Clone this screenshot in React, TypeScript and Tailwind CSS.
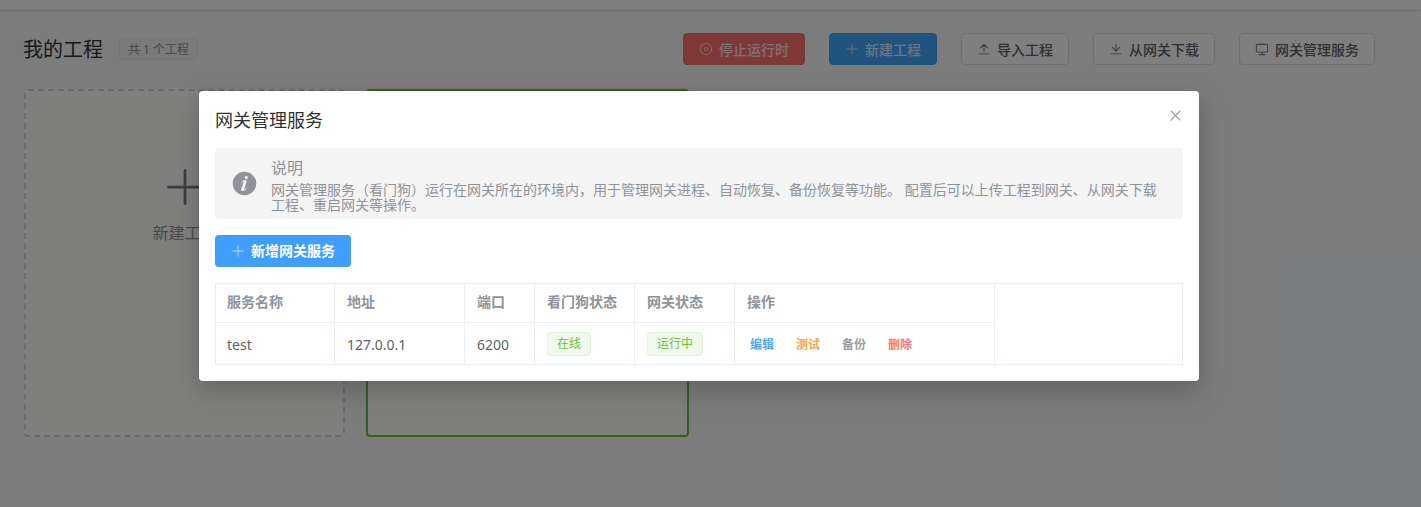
import type { ReactNode } from 'react';

const ICONS: Record<string, string> = {
  plus: 'M480 480V128a32 32 0 0 1 64 0v352h352a32 32 0 1 1 0 64H544v352a32 32 0 1 1-64 0V544H128a32 32 0 0 1 0-64h352z',
  upload: 'M160 832h704a32 32 0 1 1 0 64H160a32 32 0 1 1 0-64zm384-578.304V704h-64V247.296L237.248 490.048 192 444.8 508.8 128l316.8 316.8-45.312 45.248L544 253.696z',
  download: 'M160 832h704a32 32 0 1 1 0 64H160a32 32 0 1 1 0-64zm384-253.696 236.288-236.352 45.248 45.248L508.8 704 192 387.2l45.248-45.248L480 584.704V128h64v450.304z',
  monitor: 'M544 768v128h192a32 32 0 1 1 0 64H288a32 32 0 1 1 0-64h192V768H192A128 128 0 0 1 64 640V256a128 128 0 0 1 128-128h640a128 128 0 0 1 128 128v384a128 128 0 0 1-128 128H544zM192 192a64 64 0 0 0-64 64v384a64 64 0 0 0 64 64h640a64 64 0 0 0 64-64V256a64 64 0 0 0-64-64H192z',
  pause: 'M512 64a448 448 0 1 1 0 896 448 448 0 0 1 0-896zm0 832a384 384 0 0 0 0-768 384 384 0 0 0 0 768zm-96-544q32 0 32 32v256q0 32-32 32t-32-32V384q0-32 32-32zm192 0q32 0 32 32v256q0 32-32 32t-32-32V384q0-32 32-32z',
  close: 'M764.288 214.592 512 466.88 259.712 214.592a31.936 31.936 0 0 0-45.12 45.12L466.752 512 214.528 764.224a31.936 31.936 0 1 0 45.12 45.184L512 557.184l252.288 252.288a31.936 31.936 0 0 0 45.12-45.12L557.12 512.064l252.288-252.352a31.936 31.936 0 1 0-45.12-45.184z',
  info: 'M512 64a448 448 0 1 1 0 896.064A448 448 0 0 1 512 64zm67.2 275.072c33.28 0 60.288-23.104 60.288-57.344s-27.072-57.344-60.288-57.344c-33.28 0-60.16 23.104-60.16 57.344s26.88 57.344 60.16 57.344zM590.912 699.2c0-6.848 2.368-24.64 1.024-34.752l-52.608 60.544c-10.88 11.456-24.512 19.392-30.912 17.28a12.992 12.992 0 0 1-8.256-14.72l87.68-276.992c7.168-35.136-12.544-67.2-54.336-71.296-44.096 0-108.992 44.736-148.48 101.504 0 6.784-1.28 23.68.064 33.792l52.544-60.608c10.88-11.328 23.552-19.328 29.952-17.152a12.8 12.8 0 0 1 7.808 16.128L388.48 728.576c-10.048 30.72 8.96 60.8 55.104 68.032 67.904 0 108-43.68 147.584-97.408z',
};

function Icon({ name, className }: { name: string; className: string }) {
  return (
    <svg viewBox="0 0 1024 1024" fill="currentColor" className={className}>
      <path d={ICONS[name]} />
    </svg>
  );
}

function PageButton({ icon, className, children }: { icon: string; className: string; children: ReactNode }) {
  return (
    <button className={`flex h-8 items-center gap-1.5 rounded border px-[15px] text-sm font-medium ${className}`}>
      <Icon name={icon} className="h-[14px] w-[14px]" />
      <span className="pt-[2px]">{children}</span>
    </button>
  );
}

function Tag({ children }: { children: ReactNode }) {
  return (
    <span className="flex h-6 items-center rounded border border-[#e1f3d8] bg-[#f0f9eb] px-[9px] text-xs text-[#67c23a]">
      {children}
    </span>
  );
}

const thClass = 'border-r border-b border-[#ebeef5] pb-[2px] pl-3 text-left text-sm font-bold text-[#909399]';
const tdClass = 'border-r border-[#ebeef5] pt-[2px] pl-3 text-sm text-[#606266]';
const tagCellClass = 'border-r border-[#ebeef5] pl-3 text-sm text-[#606266]';

export default function App() {
  return (
    <div className="relative h-[507px] w-[1421px] overflow-hidden bg-[#f8f9fb] font-['Noto_Sans','Noto_Sans_CJK_SC',sans-serif]">
      <div className="h-[10px] border-b border-[#f0f0f0] bg-white shadow-sm" />

      <div className="flex h-[79px] items-start pt-[23px] pr-[46px] pl-[23px]">
        <h1 className="flex h-8 items-center pt-[2px] text-xl text-[#303133]">我的工程</h1>
        <span className="mt-[5px] ml-4 flex h-[22px] items-center rounded border border-[#e9e9eb] bg-[#f4f4f5] px-2 pt-[2px] text-xs text-[#909399]">
          共 1 个工程
        </span>
        <div className="ml-auto flex gap-6">
          <PageButton icon="pause" className="border-[#f56c6c] bg-[#ff6f6f] text-[#fde2e2]">停止运行时</PageButton>
          <PageButton icon="plus" className="border-[#409eff] bg-[#43a6ff] text-[#d9ecff]">新建工程</PageButton>
          <PageButton icon="upload" className="border-[#dcdfe6] bg-white text-[#606266]">导入工程</PageButton>
          <PageButton icon="download" className="border-[#dcdfe6] bg-white text-[#606266]">从网关下载</PageButton>
          <PageButton icon="monitor" className="border-[#dcdfe6] bg-white text-[#606266]">网关管理服务</PageButton>
        </div>
      </div>

      <div className="flex gap-[21px] pl-6">
        <div className="flex h-[348px] w-[321px] flex-col items-center rounded border-2 border-dashed border-[#d4d7de] bg-[#fefefa] pt-[74px] text-[#909399]">
          <Icon name="plus" className="h-11 w-11 text-[#7a7d83]" />
          <span className="mt-[12px] text-base">新建工程</span>
        </div>
        <div className="h-[348px] w-[323px] rounded border-2 border-[#67c23a] bg-[#fefefa]" />
      </div>

      <div className="absolute inset-0 bg-black/50" />

      <div className="absolute top-[91px] left-[199px] h-[290px] w-[1000px] rounded bg-white px-4 shadow-[0_12px_32px_4px_rgba(0,0,0,0.08),0_8px_20px_rgba(0,0,0,0.12)]">
        <h2 className="flex h-[57px] items-center pt-[1px] text-lg text-[#303133]">网关管理服务</h2>
        <Icon name="close" className="absolute top-[16px] right-[15px] h-[17px] w-[17px] text-[#909399]" />

        <div className="flex h-[71px] items-center rounded bg-[#f4f4f5] pr-4 pl-4 text-[#909399]">
          <Icon name="info" className="h-[27px] w-[27px] shrink-0" />
          <div className="ml-[13px] w-[896px]">
            <div className="mb-[2px] text-base leading-[24px]">说明</div>
            <p className="text-sm leading-[15px]">
              网关管理服务（看门狗）运行在网关所在的环境内，用于管理网关进程、自动恢复、备份恢复等功能。 配置后可以上传工程到网关、从网关下载工程、重启网关等操作。
            </p>
          </div>
        </div>

        <button className="mt-4 flex h-8 w-[136px] items-center justify-center gap-1.5 rounded bg-[#409eff] text-sm font-bold text-white">
          <Icon name="plus" className="h-[14px] w-[14px] opacity-70" />
          <span>新增网关服务</span>
        </button>

        <div className="mt-4 h-[82px] border border-[#ebeef5]">
          <table className="w-[779px] table-fixed border-separate border-spacing-0">
            <colgroup>
              <col className="w-[119px]" />
              <col className="w-[130px]" />
              <col className="w-[70px]" />
              <col className="w-[100px]" />
              <col className="w-[100px]" />
              <col className="w-[260px]" />
            </colgroup>
            <thead>
              <tr className="h-[39px]">
                <th className={`${thClass} !pl-[11px]`}>服务名称</th>
                <th className={thClass}>地址</th>
                <th className={thClass}>端口</th>
                <th className={thClass}>看门狗状态</th>
                <th className={thClass}>网关状态</th>
                <th className={thClass}>操作</th>
              </tr>
            </thead>
            <tbody>
              <tr className="h-[41px]">
                <td className={`${tdClass} !pl-[11px]`}>test</td>
                <td className={tdClass}>127.0.0.1</td>
                <td className={tdClass}>6200</td>
                <td className={tagCellClass}>
                  <div className="flex"><Tag>在线</Tag></div>
                </td>
                <td className={tagCellClass}>
                  <div className="flex"><Tag>运行中</Tag></div>
                </td>
                <td className={tdClass}>
                  <div className="flex gap-[22px] pl-[3px] text-xs font-bold opacity-90">
                    <span className="text-[#409eff]">编辑</span>
                    <span className="text-[#e6a23c]">测试</span>
                    <span className="text-[#909399]">备份</span>
                    <span className="text-[#f56c6c]">删除</span>
                  </div>
                </td>
              </tr>
            </tbody>
          </table>
        </div>
      </div>
    </div>
  );
}
